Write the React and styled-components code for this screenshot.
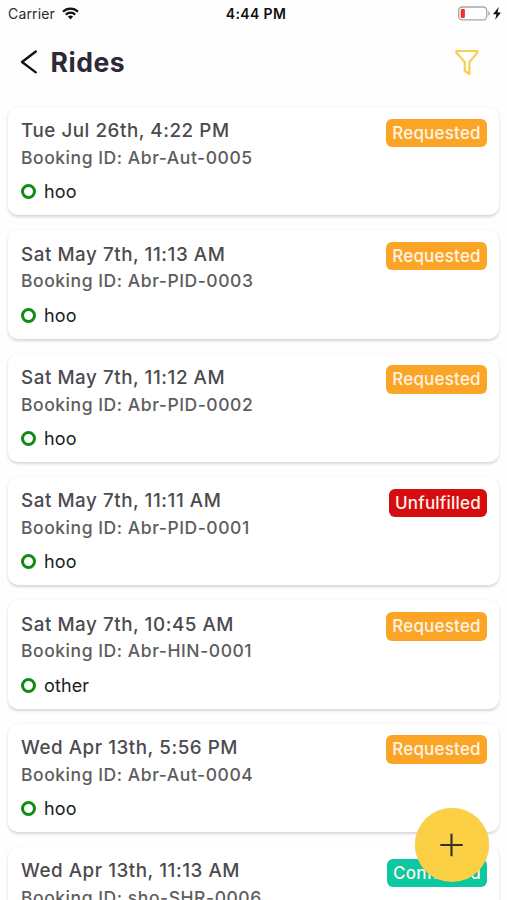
import React from "react";
import styled, { createGlobalStyle } from "styled-components";

const GlobalStyle = createGlobalStyle`
  * { box-sizing: border-box; }
  body { margin: 0; background: #fefefe; font-family: Inter, "Liberation Sans", sans-serif; }
`;

const Screen = styled.main`
  position: relative;
  width: 507px;
  height: 900px;
  overflow: hidden;
  background: #fefefe;
`;

const StatusBar = styled.div`
  display: grid;
  grid-template-columns: 1fr auto 1fr;
  align-items: center;
  height: 27px;
  padding: 0 5px 0 8px;
  font-size: 14px;
  line-height: 27px;
  color: #2a2a2a;
`;

const Network = styled.div`
  display: flex;
  align-items: center;
  gap: 7px;
  letter-spacing: 0.15px;
`;

const Clock = styled.div`
  font-weight: 600;
  color: #111;
  letter-spacing: 0.35px;
  margin-left: 2px;
`;

const Power = styled.div`
  display: flex;
  justify-content: flex-end;
  align-items: center;
`;

const Header = styled.header`
  display: flex;
  align-items: center;
  height: 70px;
  padding: 0 28px 0 20px;
`;

const IconButton = styled.button`
  display: flex;
  padding: 0;
  border: 0;
  background: none;
`;

const Title = styled.h1`
  flex: 1;
  margin: -1px 0 0 12.5px;
  font-size: 26.5px;
  line-height: 32px;
  font-weight: 700;
  letter-spacing: 0.55px;
  color: #2b2a37;
`;

const RideList = styled.div`
  display: flex;
  flex-direction: column;
  gap: 15px;
  padding: 9.8px 8px 0;
`;

const Card = styled.article`
  display: flex;
  justify-content: space-between;
  align-items: flex-start;
  flex: none;
  height: 108.4px;
  padding: 12px 12px 0 13px;
  border-radius: 10px;
  background: #fff;
  box-shadow: 0 1.5px 3px rgba(0, 0, 0, 0.16);
`;

const Details = styled.div`
  display: flex;
  flex-direction: column;
`;

const RideTime = styled.div`
  height: 25px;
  margin-top: -0.7px;
  line-height: 25px;
  font-size: 18.8px;
  font-weight: 500;
  letter-spacing: 0.55px;
  color: #4b4b4f;
  white-space: nowrap;
`;

const BookingId = styled.div`
  height: 28px;
  margin-top: 0.7px;
  line-height: 28px;
  font-size: 17.5px;
  font-weight: 500;
  letter-spacing: 0.55px;
  color: #5d5d60;
  white-space: nowrap;
`;

const Stop = styled.div`
  display: flex;
  align-items: center;
  gap: 8px;
  height: 24px;
  margin-top: 8px;
  font-size: 18px;
  letter-spacing: 0.1px;
  color: #1c1c1c;
`;

const StopDot = styled.span`
  width: 15px;
  height: 15px;
  border: 3px solid #128a16;
  border-radius: 50%;
`;

const statusColors = {
  Requested: "#faa526",
  Unfulfilled: "#d60d10",
  Confirmed: "#0bc8a0",
};

const Badge = styled.span`
  height: 28.5px;
  width: ${({ $status }) => ($status === "Unfulfilled" ? 98 : $status === "Confirmed" ? 100 : 101)}px;
  margin-top: -0.3px;
  border-radius: 6px;
  background: ${({ $status }) => statusColors[$status]};
  color: #fff3e6;
  font-size: 17px;
  font-weight: 500;
  line-height: 28px;
  text-align: center;
  letter-spacing: 0.2px;
  white-space: nowrap;
`;

const AddButton = styled.button`
  position: absolute;
  left: 415px;
  top: 808px;
  display: flex;
  align-items: center;
  justify-content: center;
  width: 74px;
  height: 74px;
  padding: 0;
  border: 0;
  border-radius: 50%;
  background: #fbd045;
  box-shadow: 0 0 1px rgba(120, 90, 0, 0.25);
`;

const rides = [
  ["Tue Jul 26th, 4:22 PM", "Abr-Aut-0005", "hoo", "Requested"],
  ["Sat May 7th, 11:13 AM", "Abr-PID-0003", "hoo", "Requested"],
  ["Sat May 7th, 11:12 AM", "Abr-PID-0002", "hoo", "Requested"],
  ["Sat May 7th, 11:11 AM", "Abr-PID-0001", "hoo", "Unfulfilled"],
  ["Sat May 7th, 10:45 AM", "Abr-HIN-0001", "other", "Requested"],
  ["Wed Apr 13th, 5:56 PM", "Abr-Aut-0004", "hoo", "Requested"],
  ["Wed Apr 13th, 11:13 AM", "sho-SHR-0006", "hoo", "Confirmed"],
];

const WifiIcon = () => (
  <svg width="17" height="13" viewBox="0 0 17 13" fill="none" stroke="#111" strokeWidth="2.2">
    <path d="M1 4.7C5.2.6 11.8.6 16 4.7" />
    <path d="M3.8 7.6C6.5 5 10.5 5 13.2 7.6" />
    <path d="M5.9 9.6C7.4 8.2 9.6 8.2 11.1 9.6L8.5 12.4Z" fill="#111" stroke="none" />
  </svg>
);

const BatteryIcon = () => (
  <svg width="44" height="16" viewBox="0 0 44 16">
    <rect x="0.7" y="1" width="28" height="12.8" rx="3.5" fill="#fff" stroke="#a6a6a6" strokeWidth="1.3" />
    <rect x="2.7" y="2.9" width="4.2" height="9" rx="1.2" fill="#f5302c" />
    <path d="M30.2 5.3v4.4c2.2-.6 2.2-3.8 0-4.4Z" fill="#a6a6a6" />
    <path d="M40.8 1 35 8.2h3.4L37.2 13.7 43 6.4h-3.5Z" fill="#111" />
  </svg>
);

const BackIcon = () => (
  <svg width="18" height="24" viewBox="0 0 18 24" fill="none" stroke="#111" strokeWidth="2.3" strokeLinecap="round" strokeLinejoin="round">
    <path d="M15.8 1.5 2 12 15.8 22.3" />
  </svg>
);

const FilterIcon = () => (
  <svg width="24" height="26" viewBox="0 0 24 26" fill="none" stroke="#f8cf4d" strokeWidth="2.2" strokeLinejoin="round">
    <path d="M1.4 2H22.4V3.6L14.4 13.2V25L9.8 21.8V13.2L1.4 3.6Z" />
  </svg>
);

const PlusIcon = () => (
  <svg width="24" height="24" viewBox="0 0 24 24" stroke="#33311f" strokeWidth="2.1">
    <path d="M11.5 .8V23.2M.3 12H22.7" />
  </svg>
);

export default function App() {
  return (
    <Screen>
      <GlobalStyle />
      <StatusBar>
        <Network>Carrier <WifiIcon /></Network>
        <Clock>4:44 PM</Clock>
        <Power><BatteryIcon /></Power>
      </StatusBar>
      <Header>
        <IconButton aria-label="Back"><BackIcon /></IconButton>
        <Title>Rides</Title>
        <IconButton aria-label="Filter"><FilterIcon /></IconButton>
      </Header>
      <RideList>
        {rides.map(([time, id, stop, status]) => (
          <Card key={id}>
            <Details>
              <RideTime>{time}</RideTime>
              <BookingId>Booking ID: {id}</BookingId>
              <Stop><StopDot />{stop}</Stop>
            </Details>
            <Badge $status={status}>{status}</Badge>
          </Card>
        ))}
      </RideList>
      <AddButton aria-label="Add ride"><PlusIcon /></AddButton>
    </Screen>
  );
}
